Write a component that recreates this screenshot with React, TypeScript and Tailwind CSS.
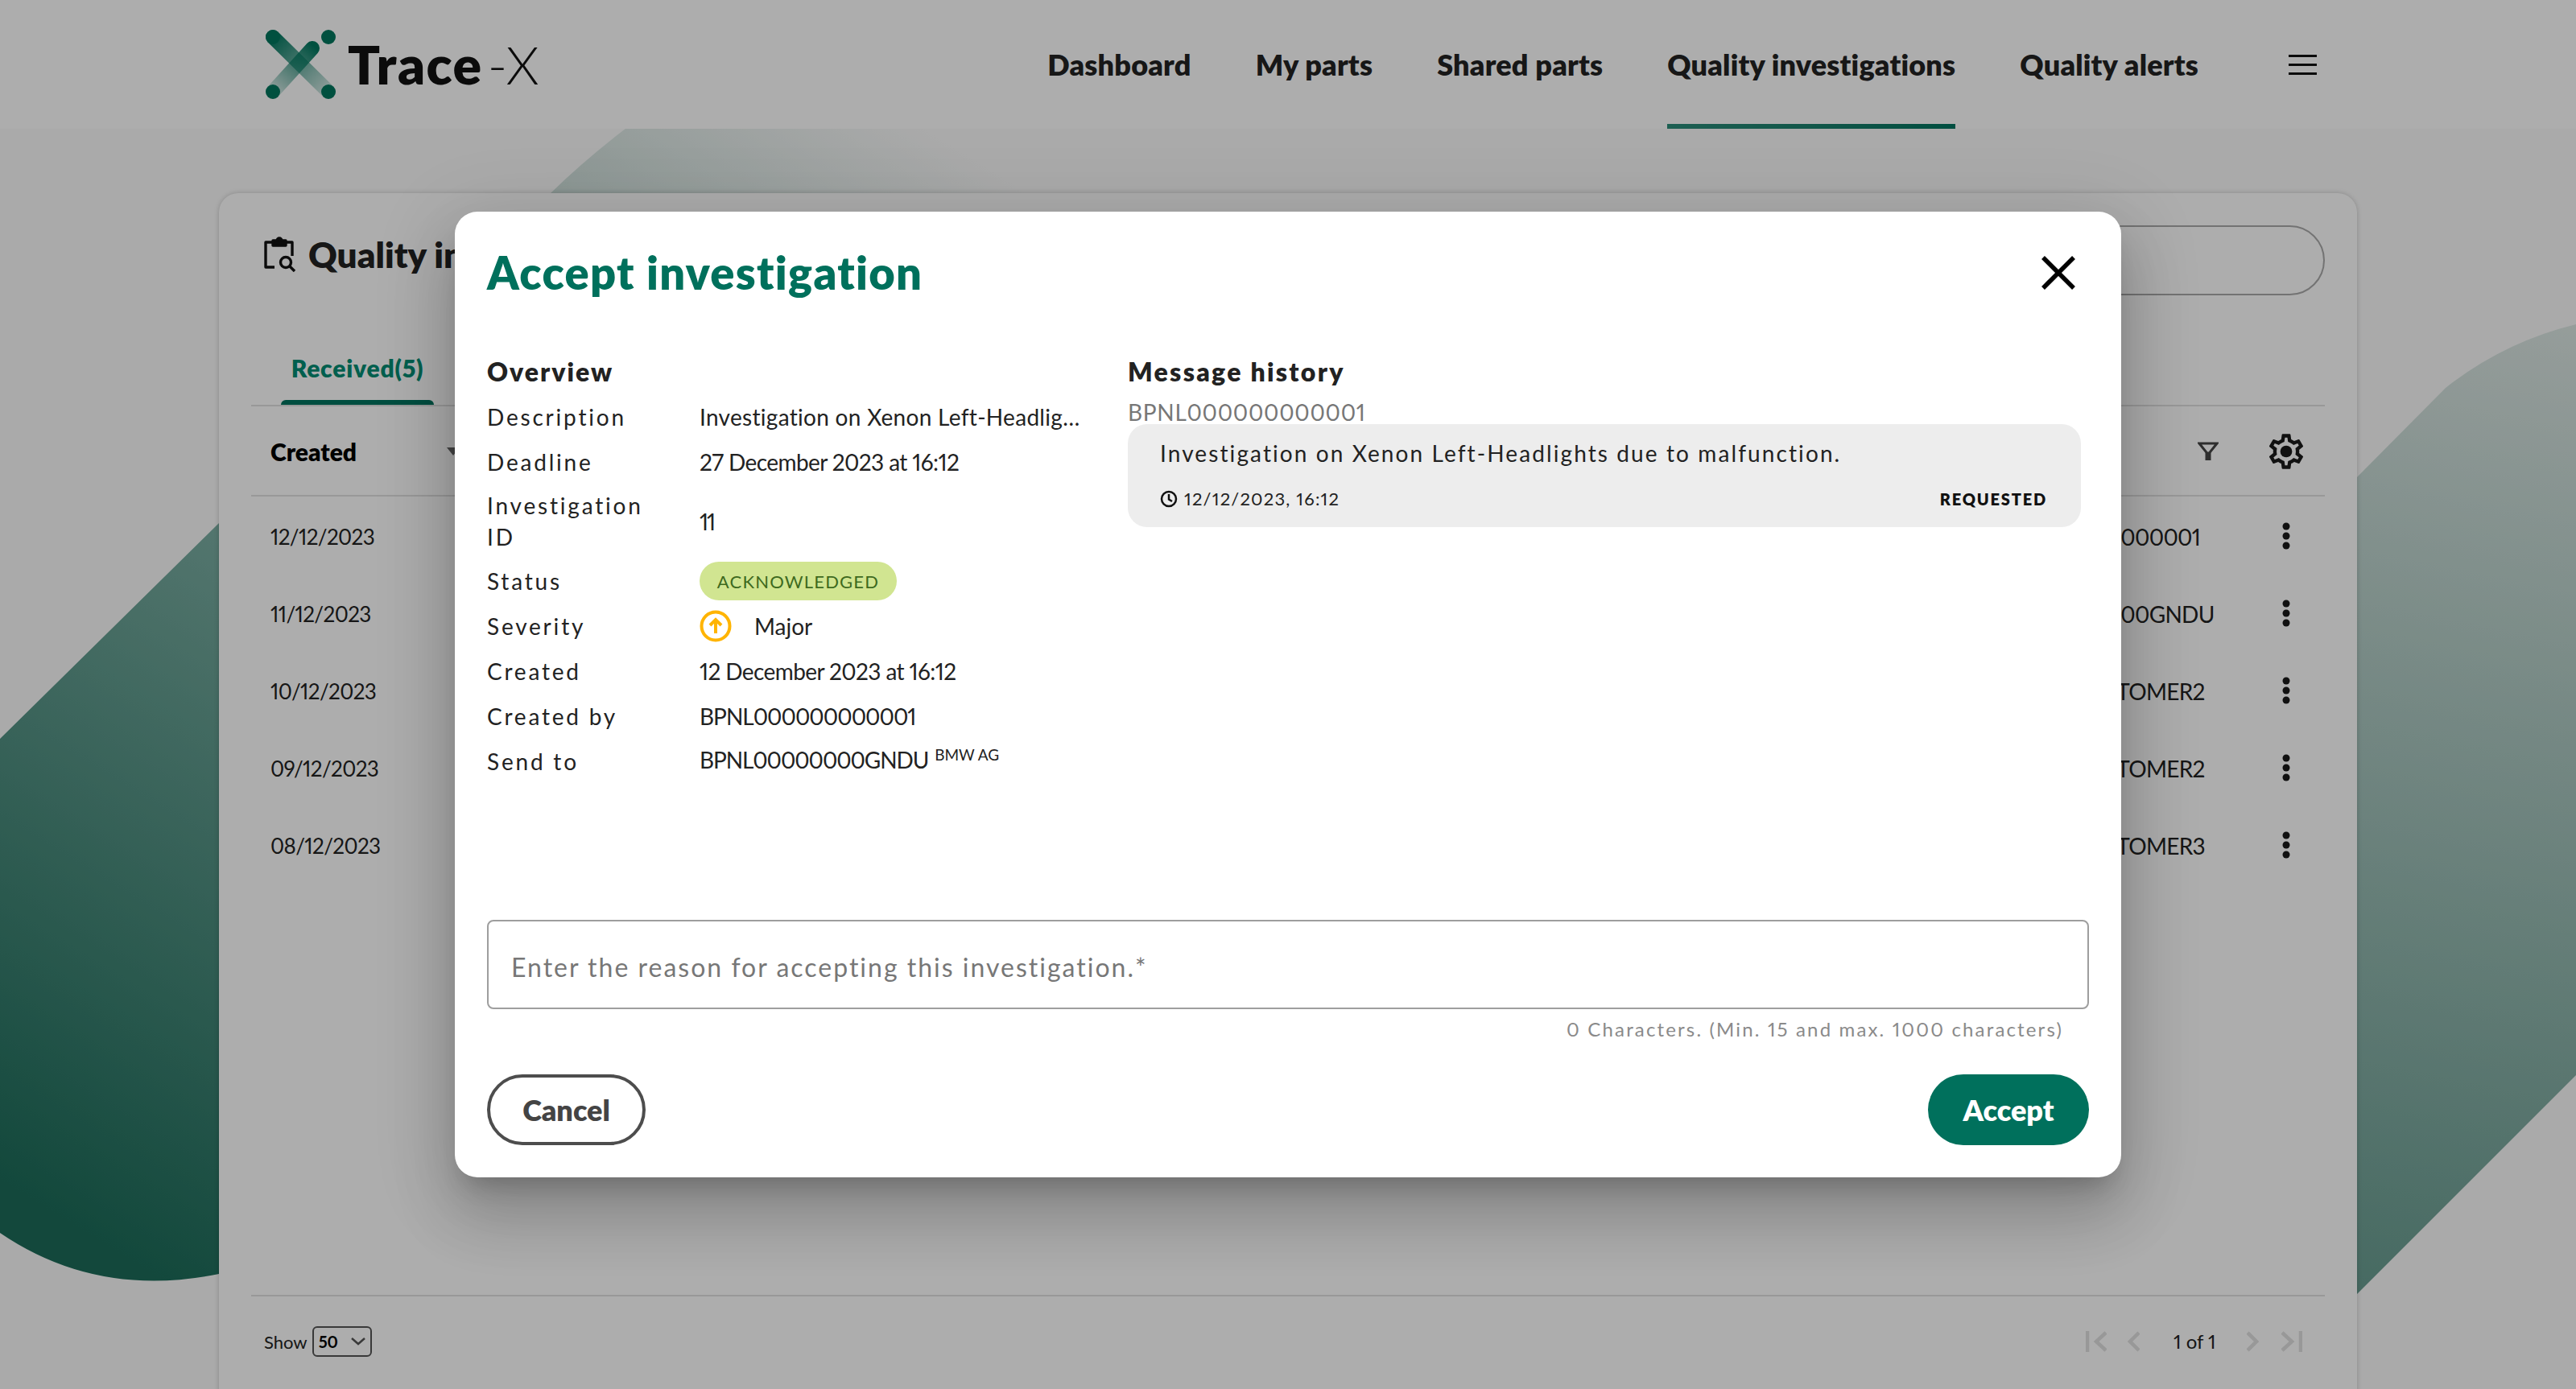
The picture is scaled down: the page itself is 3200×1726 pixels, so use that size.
import React from "react";

const nav = ["Dashboard", "My parts", "Shared parts", "Quality investigations", "Quality alerts"];
const rows = [
  ["12/12/2023", "BPNL000000000001"],
  ["11/12/2023", "BPNL00000000GNDU"],
  ["10/12/2023", "BPNL00I CUSTOMER2"],
  ["09/12/2023", "BPNL00I CUSTOMER2"],
  ["08/12/2023", "BPNL00I CUSTOMER3"],
];

function Logo() {
  return (
    <svg width="92" height="90" viewBox="0 0 92 90" className="shrink-0">
      <defs>
        <linearGradient id="lg1" x1="10" y1="10" x2="80" y2="80" gradientUnits="userSpaceOnUse">
          <stop offset="0" stopColor="#00765e" />
          <stop offset="1" stopColor="#00765e" stopOpacity="0.15" />
        </linearGradient>
        <linearGradient id="lg2" x1="62" y1="22" x2="12" y2="80" gradientUnits="userSpaceOnUse">
          <stop offset="0" stopColor="#00765e" />
          <stop offset="1" stopColor="#00765e" stopOpacity="0.15" />
        </linearGradient>
      </defs>
      <line x1="11" y1="11" x2="80" y2="79" stroke="url(#lg1)" strokeWidth="18" strokeLinecap="round" />
      <line x1="60" y1="25" x2="11" y2="79" stroke="url(#lg2)" strokeWidth="18" strokeLinecap="round" />
      <circle cx="11" cy="11" r="9" fill="#00765e" />
      <circle cx="80" cy="11" r="9" fill="#00765e" />
      <circle cx="11" cy="79" r="9" fill="#00765e" />
      <circle cx="80" cy="79" r="9" fill="#00765e" />
    </svg>
  );
}

function Background() {
  return (
    <svg className="absolute left-0 top-0 pointer-events-none" width="3200" height="1726" viewBox="0 0 3200 1726">
      <defs>
        <linearGradient id="bgl" x1="200" y1="1590" x2="1100" y2="130" gradientUnits="userSpaceOnUse">
          <stop offset="0" stopColor="#1c6b59" />
          <stop offset="0.5" stopColor="#7eb0a5" />
          <stop offset="0.8" stopColor="#c8dbd6" />
          <stop offset="1" stopColor="#fbfbfb" />
        </linearGradient>
        <linearGradient id="bgr" x1="2950" y1="1620" x2="3200" y2="380" gradientUnits="userSpaceOnUse">
          <stop offset="0" stopColor="#679c90" />
          <stop offset="1" stopColor="#dfe9e6" />
        </linearGradient>
      </defs>
      <path d="M0 918 L272 650 L684 240 Q730 195 790 150 L1500 150 L1500 1583 L272 1583 Q120 1614 0 1532 Z" fill="url(#bgl)" />
      <path d="M2800 722 L3038 482 Q3110 425 3200 403 L3200 1336 L2800 1736 Z" fill="url(#bgr)" />
    </svg>
  );
}

function Clipboard() {
  return (
    <svg width="42" height="44" viewBox="0 0 42 44" fill="none" stroke="#111" strokeWidth="3.4" className="shrink-0">
      <path d="M14 38H3V7h33v17" strokeLinejoin="round" />
      <path d="M12 11V5h5a3 3 0 0 1 6 0h5v6z" fill="#111" strokeLinejoin="round" />
      <circle cx="28" cy="32" r="6.5" />
      <path d="M33 37l6 6" />
    </svg>
  );
}

function Gear() {
  return (
    <svg width="52" height="52" viewBox="0 0 24 24" fill="#1a1a1a" className="mr-[-2px]">
      <path d="M19.43 12.98c.04-.32.07-.64.07-.98 0-.34-.03-.66-.07-.98l2.11-1.65c.19-.15.24-.42.12-.64l-2-3.46c-.09-.16-.26-.25-.44-.25-.06 0-.12.01-.17.03l-2.49 1c-.52-.4-1.08-.73-1.69-.98l-.38-2.65C14.46 2.18 14.25 2 14 2h-4c-.25 0-.46.18-.49.42l-.38 2.65c-.61.25-1.17.59-1.69.98l-2.49-1c-.06-.02-.12-.03-.18-.03-.17 0-.34.09-.43.25l-2 3.46c-.13.22-.07.49.12.64l2.11 1.65c-.04.32-.07.65-.07.98 0 .33.03.66.07.98l-2.11 1.65c-.19.15-.24.42-.12.64l2 3.46c.09.16.26.25.44.25.06 0 .12-.01.17-.03l2.49-1c.52.4 1.08.73 1.69.98l.38 2.65c.03.24.24.42.49.42h4c.25 0 .46-.18.49-.42l.38-2.65c.61-.25 1.17-.59 1.69-.98l2.49 1c.06.02.12.03.18.03.17 0 .34-.09.43-.25l2-3.46c.12-.22.07-.49-.12-.64l-2.11-1.65zm-1.98-1.71c.04.31.05.52.05.73 0 .21-.02.43-.05.73l-.14 1.13.89.7 1.08.84-.7 1.21-1.27-.51-1.04-.42-.9.68c-.43.32-.84.56-1.25.73l-1.06.43-.16 1.13-.2 1.35h-1.4l-.19-1.35-.16-1.13-1.06-.43c-.43-.18-.83-.41-1.23-.71l-.91-.7-1.06.43-1.27.51-.7-1.21 1.08-.84.89-.7-.14-1.13c-.03-.31-.05-.54-.05-.74s.02-.43.05-.73l.14-1.13-.89-.7-1.08-.84.7-1.21 1.27.51 1.04.42.9-.68c.43-.32.84-.56 1.25-.73l1.06-.43.16-1.13.2-1.35h1.39l.19 1.35.16 1.13 1.06.43c.43.18.83.41 1.23.71l.91.7 1.06-.43 1.27-.51.7 1.21-1.07.85-.89.7.14 1.13z" />
      <circle cx="12" cy="12" r="3.4" />
    </svg>
  );
}

function Kebab() {
  return (
    <svg width="12" height="34" viewBox="0 0 12 34" fill="#1a1a1a">
      <circle cx="6" cy="5" r="4.5" />
      <circle cx="6" cy="17" r="4.5" />
      <circle cx="6" cy="29" r="4.5" />
    </svg>
  );
}

function Pager({ d, w }: { d: string; w: number }) {
  return (
    <svg width={w} height="26" viewBox={`0 0 ${w} 26`} fill="none" stroke="#e0e0e0" strokeWidth="4.5">
      <path d={d} />
    </svg>
  );
}

function Row({ label, children, tall }: { label: string; children: React.ReactNode; tall?: boolean }) {
  return (
    <div className={`grid grid-cols-[264px_1fr] items-center ${tall ? "h-[92px]" : "h-[56px]"}`}>
      <div className="text-[28px] leading-[39px] tracking-[2.8px] text-[#222] pr-[50px]">{label}</div>
      <div className="text-[28px] leading-[39px] text-[#222] min-w-0">{children}</div>
    </div>
  );
}

export default function App() {
  return (
    <div className="relative w-[3200px] h-[1726px] overflow-hidden bg-[#fbfbfb] [font-family:Lato,sans-serif] [font-feature-settings:'pnum']">
      <Background />

      {/* Header */}
      <header className="relative h-[160px] bg-white flex items-center pl-[328px] pr-[322px]">
        <Logo />
        <div className="ml-[12px] flex items-baseline text-[#111] text-[66px] leading-none">
          <span className="font-extrabold tracking-[1.5px]">Trace</span>
          <span className="font-light ml-[6px]">-X</span>
        </div>
        <nav className="ml-auto flex items-stretch h-full gap-[80px]">
          {nav.map((n, i) => (
            <div key={n} className="relative flex items-center text-[36px] font-extrabold tracking-[0.2px] text-[#222]">
              {n}
              {i === 3 && (
                <div className="absolute left-0 right-0 bottom-0 h-[6px] bg-gradient-to-r from-[#2b8c7a] to-[#00745f]" />
              )}
            </div>
          ))}
        </nav>
        <div className="ml-[112px] flex flex-col gap-[8px] w-[35px]">
          <div className="h-[3px] bg-[#111]" />
          <div className="h-[3px] bg-[#111]" />
          <div className="h-[3px] bg-[#111]" />
        </div>
      </header>

      {/* Card */}
      <main className="relative ml-[272px] mt-[80px] w-[2656px] h-[1500px] bg-white rounded-t-[24px] shadow-[0_0_6px_rgba(0,0,0,0.2)] px-[40px] pt-[40px]">
        <div className="flex items-start justify-between h-[87px]">
          <div className="flex items-center pl-[15px] pt-[14px] gap-[14px]">
            <Clipboard />
            <span className="text-[44px] font-extrabold text-[#222] leading-none">Quality investigations</span>
          </div>
          <div className="w-[700px] h-[87px] rounded-full border-2 border-[#aaa]" />
        </div>

        <div className="h-[138px] flex items-end border-b-2 border-[#e1e1e1]">
          <div className="relative ml-[37px] w-[190px] h-[68px] flex justify-center">
            <span className="text-[30px] font-extrabold text-[#008d73] leading-[44px] tracking-[0.8px]">Received(5)</span>
            <div className="absolute left-0 right-0 bottom-0 h-[6px] rounded-t-[6px] bg-[#00745f]" />
          </div>
        </div>

        <div className="h-[112px] flex items-center border-b-2 border-[#e1e1e1] pl-[24px] pr-[24px] pt-[2px]">
          <span className="text-[30px] font-extrabold text-black">Created</span>
          <svg width="16" height="10" viewBox="0 0 16 10" className="ml-[112px]" fill="#666">
            <path d="M0 0h16L8 10z" />
          </svg>
          <svg width="26" height="26" viewBox="0 0 26 26" fill="none" stroke="#444" strokeWidth="3" className="ml-auto mr-[58px]">
            <path d="M2 3h22L16 13l-3 3-3-3z" />
            <path d="M13 14v10" strokeWidth="7" />
          </svg>
          <Gear />
        </div>

        {rows.map(([d, b]) => (
          <div key={d} className="h-[96px] flex items-center pl-[24px] pr-[24px] pt-[2px] text-[#222]">
            <span className="w-[2124px] text-[26px] tracking-[-0.6px] pt-[2px]">{d}</span>
            <span className="w-[356px] truncate text-[28px] tracking-[-0.7px] pt-[2px]">{b}</span>
            <div className="w-[48px] flex justify-center">
              <Kebab />
            </div>
          </div>
        ))}

        <div className="mt-[512px] h-[2px] bg-[#e1e1e1]" />
        <div className="h-[112px] flex items-center pl-[16px] pr-[28px]">
          <span className="text-[22px] text-[#222]">Show</span>
          <div className="ml-[6px] w-[74px] h-[38px] rounded-[6px] border-2 border-[#555] flex items-center justify-between pl-[6px] pr-[6px]">
            <span className="text-[20px] font-bold text-black">50</span>
            <svg width="18" height="10" viewBox="0 0 18 10" fill="none" stroke="#555" strokeWidth="2.5">
              <path d="M1 1l8 7 8-7" />
            </svg>
          </div>
          <div className="ml-auto flex items-center">
            <Pager w={26} d="M2 0v26M25 2L13 13l12 11" />
            <div className="ml-[26px]"><Pager w={15} d="M14 2L3 13l11 11" /></div>
            <span className="ml-[42px] w-[50px] text-[24px] text-[#222] whitespace-nowrap">1 of 1</span>
            <div className="ml-[41px]"><Pager w={15} d="M1 2l11 11L1 24" /></div>
            <div className="ml-[28px]"><Pager w={26} d="M1 2l12 11L1 24M24 0v26" /></div>
          </div>
        </div>
      </main>

      {/* Overlay + dialog */}
      <div className="absolute inset-0 bg-black/[0.32] flex items-center justify-center">
        <div className="w-[2070px] h-[1200px] bg-white rounded-[28px] shadow-[0_22px_30px_-14px_rgba(0,0,0,0.2),0_48px_76px_6px_rgba(0,0,0,0.14),0_18px_92px_16px_rgba(0,0,0,0.12)] pl-[40px] pr-[40px] pb-[40px] pt-[40px] flex flex-col">
          <div className="flex items-center justify-between h-[72px] pr-[17px]">
            <h2 className="text-[56px] font-extrabold tracking-[1.3px] text-[#00705c] leading-none">Accept investigation</h2>
            <svg width="42" height="42" viewBox="0 0 42 42" stroke="#000" strokeWidth="5.5">
              <path d="M2 2l38 38M40 2L2 40" />
            </svg>
          </div>

          <div className="mt-[58px] grid grid-cols-[796px_1184px]">
            <div>
              <div className="h-[57px] flex items-center text-[32px] font-extrabold tracking-[2px] text-[#222]">Overview</div>
              <Row label="Description">
                <div className="w-[484px] truncate tracking-[0.3px]">Investigation on Xenon Left-Headlights due to malfunction.</div>
              </Row>
              <Row label="Deadline"><span className="tracking-[-0.6px]">27 December 2023 at 16:12</span></Row>
              <Row label="Investigation ID" tall><span className="tracking-[-2px]">11</span></Row>
              <Row label="Status">
                <div className="w-[245px] h-[48px] rounded-full bg-[#d1e591] flex items-center justify-center text-[22px] tracking-[1.2px] text-[#3e6a1e]">
                  ACKNOWLEDGED
                </div>
              </Row>
              <Row label="Severity">
                <div className="flex items-center">
                  <svg width="40" height="40" viewBox="0 0 40 40" fill="none" stroke="#ffb400">
                    <circle cx="20" cy="20" r="17.5" strokeWidth="4" />
                    <path d="M20 29V13M13 19l7-7 7 7" strokeWidth="4" />
                  </svg>
                  <span className="ml-[28px]">Major</span>
                </div>
              </Row>
              <Row label="Created"><span className="tracking-[-0.6px]">12 December 2023 at 16:12</span></Row>
              <Row label="Created by"><span className="tracking-[-1px]">BPNL000000000001</span></Row>
              <Row label="Send to">
                <span className="tracking-[-1.1px]">BPNL00000000GNDU</span>
                <span className="relative top-[-10px] ml-[8px] text-[19px]">BMW AG</span>
              </Row>
            </div>

            <div>
              <div className="h-[57px] flex items-center text-[32px] font-extrabold tracking-[2.3px] text-[#222]">Message history</div>
              <div className="h-[37px] pt-[6px] flex items-center text-[28px] tracking-[0.7px] text-[#777]">BPNL000000000001</div>
              <div className="h-[128px] rounded-[24px] bg-[#ededed] pl-[40px] pr-[42px] pt-[16px]">
                <div className="text-[28px] leading-[40px] tracking-[2.1px] text-[#222]">
                  Investigation on Xenon Left-Headlights due to malfunction.
                </div>
                <div className="mt-[20px] flex items-center justify-between">
                  <div className="flex items-center text-[22px] tracking-[1.2px] text-[#222]">
                    <svg width="22" height="22" viewBox="0 0 22 22" fill="none" stroke="#111" strokeWidth="2.5" className="mr-[8px]">
                      <circle cx="11" cy="11" r="9" />
                      <path d="M11 5v6.5l4 2.5" />
                    </svg>
                    12/12/2023, 16:12
                  </div>
                  <span className="text-[20px] font-extrabold tracking-[1.8px] text-[#111]">REQUESTED</span>
                </div>
              </div>
            </div>
          </div>

          <div className="mt-auto h-[111px] rounded-[8px] border-2 border-[#9e9e9e] flex items-center pl-[28px] pt-[6px] text-[32px] tracking-[2px] text-[#777]">
            Enter the reason for accepting this investigation.*
          </div>
          <div className="mt-[10px] h-[30px] flex items-center justify-end pr-[32px] text-[24px] tracking-[2.15px] text-[#8a8a8a]">
            0 Characters. (Min. 15 and max. 1000 characters)
          </div>
          <div className="mt-[41px] flex items-center justify-between">
            <button className="w-[197px] h-[88px] rounded-full border-4 border-[#4d4d4d] text-[36px] font-extrabold text-[#444]">Cancel</button>
            <button className="w-[200px] h-[88px] rounded-full bg-[#00705c] text-[36px] font-extrabold text-white">Accept</button>
          </div>
        </div>
      </div>
    </div>
  );
}
